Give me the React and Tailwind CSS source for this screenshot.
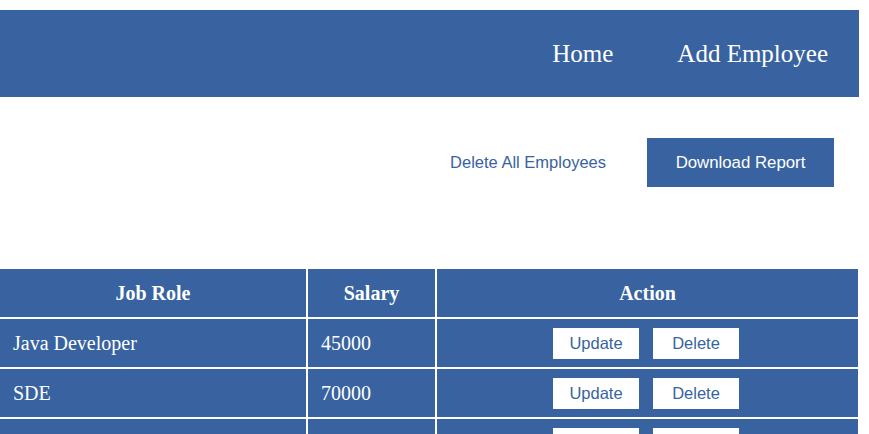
import React from 'react';

const employees = [
    { role: 'Java Developer', salary: '45000' },
    { role: 'SDE', salary: '70000' },
    { role: 'Tester', salary: '30000' },
];

const serif = { fontFamily: '"Liberation Serif", "Times New Roman", serif' };

function App() {
    return (
        <div className="pt-[10px] bg-white min-h-screen" style={{ fontFamily: '"Liberation Sans", Arial, sans-serif' }}>
            {/* Navbar */}
            <nav className="w-[859px] h-[87px] bg-[#3863a0] flex items-center justify-end pr-[31px] gap-[64px] text-white text-[25px]" style={serif}>
                <a href="#">Home</a>
                <a href="#">Add Employee</a>
            </nav>

            {/* Actions */}
            <div className="flex justify-end items-center w-[859px] pr-[25px] pt-[41px] gap-[41px]">
                <button className="text-[#3863a0] text-[16.5px]">Delete All Employees</button>
                <button className="bg-[#3863a0] text-white text-[16.8px] w-[187px] h-[49px]">Download Report</button>
            </div>

            {/* Table */}
            <div className="mt-[82px] w-[858px] bg-white grid grid-cols-[306px_127px_421px] gap-[2px] text-white text-[20px]" style={serif}>
                <div className="bg-[#3863a0] h-[48px] flex items-center justify-center font-bold">Job Role</div>
                <div className="bg-[#3863a0] h-[48px] flex items-center justify-center font-bold">Salary</div>
                <div className="bg-[#3863a0] h-[48px] flex items-center justify-center font-bold">Action</div>
                {employees.map((e) => (
                    <React.Fragment key={e.role}>
                        <div className="bg-[#3863a0] h-[48px] flex items-center pl-[13px]">{e.role}</div>
                        <div className="bg-[#3863a0] h-[48px] flex items-center pl-[13px]">{e.salary}</div>
                        <div className="bg-[#3863a0] h-[48px] flex items-center justify-center gap-[14px] pr-[3px]" style={{ fontFamily: '"Liberation Sans", Arial, sans-serif' }}>
                            <button className="bg-white text-[#3863a0] text-[16.5px] w-[86px] h-[31px]">Update</button>
                            <button className="bg-white text-[#3863a0] text-[16.5px] w-[86px] h-[31px]">Delete</button>
                        </div>
                    </React.Fragment>
                ))}
            </div>
        </div>
    );
}

export default App;
